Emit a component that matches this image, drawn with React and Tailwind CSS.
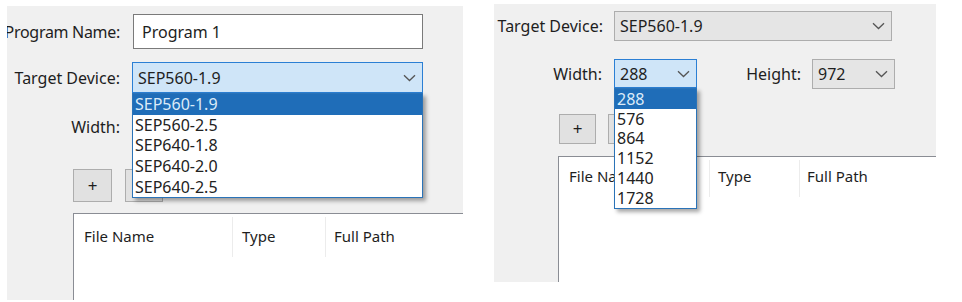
import React from "react";

const Chevron = ({ className = "" }) => (
  <svg width="13" height="8" viewBox="0 0 13 8" className={className}>
    <path d="M1 1.2 L6.5 6.5 L12 1.2" fill="none" stroke="#555" strokeWidth="1.3" />
  </svg>
);

const Combo = ({ value, focused, className = "" }) => (
  <div
    className={
      "flex items-center justify-between pl-[5px] pr-[6px] border " +
      (focused ? "bg-[#cfe5f8] border-[#2b7fd4]" : "bg-[#e5e5e5] border-[#adadad]") +
      " " +
      className
    }
  >
    <span className="leading-none">{value}</span>
    <Chevron />
  </div>
);

const DropList = ({ items, className = "", itemH }) => (
  <div
    className={
      "absolute z-10 bg-white border border-[#2a73b8] shadow-[3px_3px_4px_rgba(0,0,0,0.35)] flex flex-col " +
      className
    }
  >
    {items.map((it, i) => (
      <div
        key={it}
        className={
          "flex items-center pl-[2px] leading-none " +
          itemH +
          (i === 0 ? " bg-[#1f6db8] text-[#dcebf9]" : " text-[#222]")
        }
      >
        {it}
      </div>
    ))}
  </div>
);

const Table = ({ className = "", col1, col2, headerH, hdrTop }) => (
  <div className={"bg-white border-l border-t border-[#8a8d94] text-[15px] " + className}>
    <div className={"relative flex " + headerH}>
      <div className={"absolute left-[10px] " + hdrTop}>File Name</div>
      <div className={"absolute h-full w-px bg-[#ececec] top-[3px] " + col1.sep} />
      <div className={"absolute " + col1.text + " " + hdrTop}>Type</div>
      <div className={"absolute h-full w-px bg-[#ececec] top-[3px] " + col2.sep} />
      <div className={"absolute " + col2.text + " " + hdrTop}>Full Path</div>
    </div>
  </div>
);

export default function App() {
  return (
    <div
      className="w-[962px] h-[302px] bg-white flex items-start text-[16px] text-[#1e1e1e] overflow-hidden"
      style={{ fontFamily: '"Noto Sans", "Open Sans", sans-serif' }}
    >
      {/* Left panel */}
      <div className="relative ml-[7px] mt-[6px] w-[456px] h-[294px] bg-[#f0f0f0] flex flex-col overflow-hidden">
        <div className="flex items-center mt-[8px] h-[35px]">
          <div className="w-[113px] shrink-0 flex justify-end whitespace-nowrap tracking-[-0.3px]">Program Name:</div>
          <div className="ml-[13px] w-[290px] h-[35px] bg-white border border-[#7a7a7a] flex items-center pl-[8px]">
            Program 1
          </div>
        </div>
        <div className="relative flex items-center mt-[13px] h-[31px]">
          <div className="w-[113px] shrink-0 text-right whitespace-nowrap">Target Device:</div>
          <Combo value="SEP560-1.9" focused className="ml-[12px] w-[291px] h-[31px]" />
          <DropList
            items={["SEP560-1.9", "SEP560-2.5", "SEP640-1.8", "SEP640-2.0", "SEP640-2.5"]}
            className="left-[125px] top-[31px] w-[291px] h-[105px]"
            itemH="h-[20.6px]"
          />
        </div>
        <div className="flex items-center mt-[21px] h-[26px]">
          <div className="w-[113px] text-right">Width:</div>
        </div>
        <div className="flex mt-[29px] ml-[66px] gap-[13px]">
          <div className="w-[39px] h-[33px] bg-[#e1e1e1] border border-[#adadad] flex items-center justify-center text-[17px]">
            +
          </div>
          <div className="w-[38px] h-[33px] bg-[#e1e1e1] border border-[#adadad]" />
        </div>
        <Table
          className="mt-[11px] ml-[66px] flex-1"
          headerH="h-[40px]"
          hdrTop="top-[11px]"
          col1={{ sep: "left-[158px]", text: "left-[168px]" }}
          col2={{ sep: "left-[251px]", text: "left-[260px]" }}
        />
      </div>

      {/* Right panel */}
      <div className="relative ml-[31px] mt-[4px] w-[442px] h-[278px] bg-[#f0f0f0] flex flex-col">
        <div className="flex items-center mt-[7px] h-[30px]">
          <div className="w-[109px] shrink-0 text-right whitespace-nowrap">Target Device:</div>
          <Combo value="SEP560-1.9" className="ml-[11px] w-[278px] h-[30px]" />
        </div>
        <div className="relative flex items-center mt-[18px] h-[29px]">
          <div className="w-[108px] text-right">Width:</div>
          <Combo value="288" focused className="ml-[12px] w-[83px] h-[29px]" />
          <div className="ml-[44px] w-[60px] text-right">Height:</div>
          <Combo value="972" className="ml-[11px] w-[83px] h-[30px]" />
          <DropList
            items={["288", "576", "864", "1152", "1440", "1728"]}
            className="left-[120px] top-[29px] w-[83px] h-[121px]"
            itemH="h-[19.8px]"
          />
        </div>
        <div className="flex mt-[26px] ml-[65px] gap-[12px]">
          <div className="w-[37px] h-[30px] bg-[#e1e1e1] border border-[#adadad] flex items-center justify-center text-[17px]">
            +
          </div>
          <div className="w-[37px] h-[30px] bg-[#e1e1e1] border border-[#adadad]" />
        </div>
        <Table
          className="mt-[12px] ml-[64px] flex-1"
          headerH="h-[37px]"
          hdrTop="top-[8px]"
          col1={{ sep: "left-[150px]", text: "left-[159px]" }}
          col2={{ sep: "left-[240px]", text: "left-[248px]" }}
        />
      </div>
    </div>
  );
}
